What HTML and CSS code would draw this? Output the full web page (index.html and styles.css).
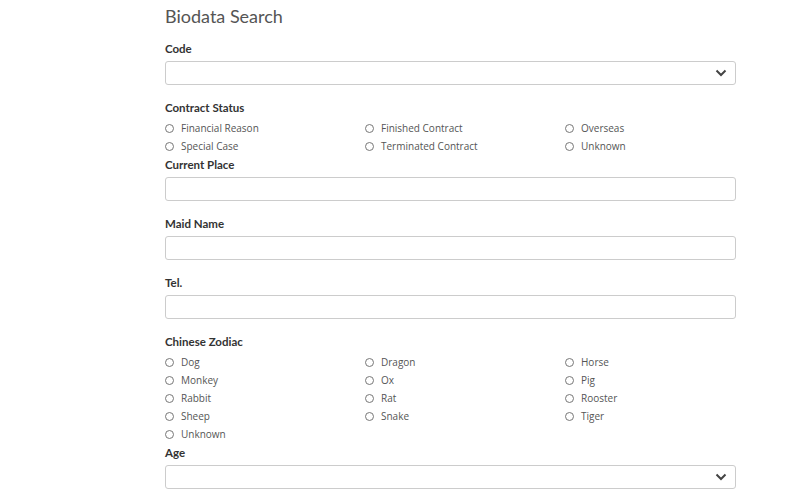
FILE: index.html
```html
<!DOCTYPE html>
<html lang="en">
<head>
  <meta charset="UTF-8" />
  <meta name="viewport" content="width=device-width, initial-scale=1.0" />
  <title>Biodata Search</title>
  <link rel="stylesheet" href="styles.css">
</head>
<body>
  <div class="search">
    <h1>Biodata Search</h1>

    <div class="field">
      <label class="field-label">Code</label>
      <div class="select">
        <svg class="chevron" width="12" height="8" viewBox="0 0 12 8"><path d="M1.5 1.5 L6 6 L10.5 1.5" fill="none" stroke="#444" stroke-width="2"/></svg>
      </div>
    </div>

    <div class="field radios-field">
      <label class="field-label">Contract Status</label>
      <div class="radios">
        <label class="radio"><input type="radio" name="status"> Financial Reason</label>
        <label class="radio"><input type="radio" name="status"> Finished Contract</label>
        <label class="radio"><input type="radio" name="status"> Overseas</label>
        <label class="radio"><input type="radio" name="status"> Special Case</label>
        <label class="radio"><input type="radio" name="status"> Terminated Contract</label>
        <label class="radio"><input type="radio" name="status"> Unknown</label>
      </div>
    </div>

    <div class="field">
      <label class="field-label">Current Place</label>
      <input class="text" type="text">
    </div>

    <div class="field">
      <label class="field-label">Maid Name</label>
      <input class="text" type="text">
    </div>

    <div class="field">
      <label class="field-label">Tel.</label>
      <input class="text" type="text">
    </div>

    <div class="field radios-field">
      <label class="field-label">Chinese Zodiac</label>
      <div class="radios">
        <label class="radio"><input type="radio" name="zodiac"> Dog</label>
        <label class="radio"><input type="radio" name="zodiac"> Dragon</label>
        <label class="radio"><input type="radio" name="zodiac"> Horse</label>
        <label class="radio"><input type="radio" name="zodiac"> Monkey</label>
        <label class="radio"><input type="radio" name="zodiac"> Ox</label>
        <label class="radio"><input type="radio" name="zodiac"> Pig</label>
        <label class="radio"><input type="radio" name="zodiac"> Rabbit</label>
        <label class="radio"><input type="radio" name="zodiac"> Rat</label>
        <label class="radio"><input type="radio" name="zodiac"> Rooster</label>
        <label class="radio"><input type="radio" name="zodiac"> Sheep</label>
        <label class="radio"><input type="radio" name="zodiac"> Snake</label>
        <label class="radio"><input type="radio" name="zodiac"> Tiger</label>
        <label class="radio"><input type="radio" name="zodiac"> Unknown</label>
      </div>
    </div>

    <div class="field">
      <label class="field-label">Age</label>
      <div class="select">
        <svg class="chevron" width="12" height="8" viewBox="0 0 12 8"><path d="M1.5 1.5 L6 6 L10.5 1.5" fill="none" stroke="#444" stroke-width="2"/></svg>
      </div>
    </div>
  </div>
</body>
</html>
```

FILE: styles.css
```css
body {
  margin: 0;
  background: #fff;
  font-family: Lato, "Open Sans", sans-serif;
  color: #333;
}
.search {
  width: 571px;
  margin-left: 165px;
  padding-top: 4px;
}
h1 {
  margin: 0 0 13px;
  font-size: 18px;
  line-height: 24px;
  font-weight: 400;
  color: #555;
}
.field {
  margin-bottom: 15px;
}
.radios-field {
  margin-top: 14.5px;
  margin-bottom: 2px;
}
.field-label {
  display: block;
  font-size: 11.5px;
  font-weight: 700;
  line-height: 16px;
  margin-bottom: 4px;
  color: #333;
}
.radios-field .field-label {
  margin-bottom: 3px;
}
.select, .text {
  display: flex;
  align-items: center;
  justify-content: flex-end;
  box-sizing: border-box;
  width: 100%;
  height: 24px;
  border: 1px solid #ccc;
  border-radius: 3px;
  background: #fff;
  margin: 0;
}
.chevron {
  margin-right: 8px;
}
.radios {
  display: grid;
  grid-template-columns: 200px 200px 171px;
}
.radio {
  display: flex;
  align-items: center;
  height: 18px;
  font-family: "Open Sans", sans-serif;
  font-size: 10px;
  color: #555;
  white-space: nowrap;
}
.radio input {
  appearance: none;
  box-sizing: border-box;
  width: 9px;
  height: 9px;
  margin: 0 7px 0 0;
  border: 1px solid #777;
  border-radius: 50%;
  background: #fff;
}
```
